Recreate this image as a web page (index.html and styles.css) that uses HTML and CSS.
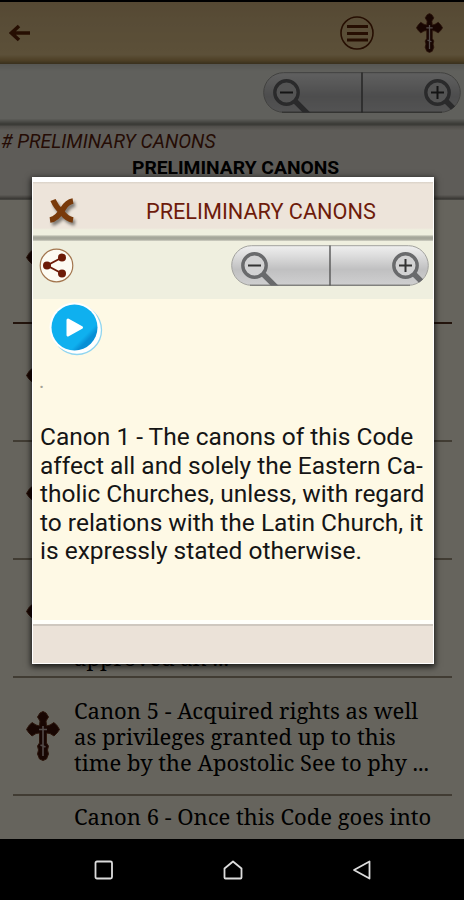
FILE: index.html
```html
<!DOCTYPE html>
<html lang="en">
<head>
  <meta charset="UTF-8" />
  <meta name="viewport" content="width=device-width, initial-scale=1.0"/>
  <title>Preliminary Canons</title>
  <link rel="stylesheet" href="styles.css">
</head>
<body>

<!-- shared icons -->
<svg class="defs" width="0" height="0">
  <defs>
    <linearGradient id="pill" x1="0" y1="0" x2="0" y2="1">
      <stop offset="0" stop-color="#efefef"/>
      <stop offset="0.25" stop-color="#dddddd"/>
      <stop offset="0.6" stop-color="#c0c0c1"/>
      <stop offset="1" stop-color="#cfcfd0"/>
    </linearGradient>
    <clipPath id="pillClip"><rect x="0.5" y="0.5" width="197" height="40" rx="20"/></clipPath>
    <linearGradient id="blue" x1="0" y1="0" x2="1" y2="1">
      <stop offset="0.7" stop-color="#0fb0ef"/>
      <stop offset="0.78" stop-color="#078fd6"/>
    </linearGradient>
    <symbol id="zoom" viewBox="0 0 198 41">
      <rect x="0.7" y="0.7" width="196.6" height="39.6" rx="19.8" fill="url(#pill)" stroke="#a2a29e" stroke-width="1"/>
      <path d="M19 40.2H179" stroke="#6d6d6b" stroke-width="1"/>
      <path d="M99 0.5V40.5" stroke="#555" stroke-width="1.4"/>
      <g fill="none" stroke="#696a6c" clip-path="url(#pillClip)">
        <path d="M32 29L46 43M183 29L197 43" stroke-width="5.4"/>
        <circle cx="23.5" cy="20.5" r="11.7" fill="#d2d2d3" stroke-width="3.4"/>
        <circle cx="174.5" cy="20.5" r="11.7" fill="#d2d2d3" stroke-width="3.4"/>
        <path d="M17 20.5H30M168 20.5H181M174.5 14V27" stroke="#333" stroke-width="2"/>
      </g>
    </symbol>
    <symbol id="cross" viewBox="0 0 34 50">
      <path d="M17 0.5L20 2L22.5 6L20 10L20.5 15L24 14L28 11.5L31 14.5L33.5 18.5L31 22L28 25L24 22.5L20.5 22L20.5 32L22.5 35L21.5 39L22.5 43L20.5 48L17 49.5L13.5 48L11.5 43L12.5 39L11.5 35L13.5 32V22L10 22.5L6 25L3 22L0.5 18.5L3 14.5L6 11.5L10 14L13.5 15L14 10L11.5 6L14 2Z" fill="#3d0f06" stroke="#6b351c" stroke-width="1"/>
      <path d="M17 15V45M13 18.5H21M14.5 34L19.5 36" stroke="#cbb8b4" stroke-width="1.6" fill="none"/>
    </symbol>
  </defs>
</svg>

<div class="phone">
  <div class="app">
    <header class="topbar">
      <svg class="back" width="22" height="18" viewBox="0 0 22 18"><path d="M21 9H3M10 2L2.5 9L10 16" fill="none" stroke="#5f2505" stroke-width="3.6"/></svg>
      <svg class="menu" width="34" height="34" viewBox="0 0 34 34">
        <circle cx="17" cy="17" r="16" fill="none" stroke="#5f2505" stroke-width="1.6"/>
        <path d="M7 10.5H28M7 17.5H28M7 24H28" stroke="#5f2505" stroke-width="2.8"/>
      </svg>
      <svg class="top-cross" width="27" height="40"><use href="#cross"/></svg>
    </header>

    <div class="tools">
      <svg width="198" height="41"><use href="#zoom"/></svg>
    </div>

    <div class="section">
      <div class="crumb"># PRELIMINARY CANONS</div>
      <div class="section-title">PRELIMINARY CANONS</div>
    </div>

    <div class="list">
      <div class="row"><svg class="bullet" width="34" height="50"><use href="#cross"/></svg></div>
      <div class="row"><svg class="bullet" width="34" height="50"><use href="#cross"/></svg></div>
      <div class="row"><svg class="bullet" width="34" height="50"><use href="#cross"/></svg></div>
      <div class="row">
        <svg class="bullet" width="34" height="50"><use href="#cross"/></svg>
        <p class="last-line">approved an ...</p>
      </div>
      <div class="row">
        <svg class="bullet" width="34" height="50"><use href="#cross"/></svg>
        <p>Canon 5 - Acquired rights as well<br>as privileges granted up to this<br>time by the Apostolic See to phy ...</p>
      </div>
      <div class="row cut">
        <p>Canon 6 - Once this Code goes into</p>
      </div>
    </div>
    <div class="shade"></div>
  </div>

  <nav class="navbar">
    <svg width="20" height="20" viewBox="0 0 20 20"><rect x="1.5" y="1.5" width="16.5" height="17" rx="1.5"/></svg>
    <svg width="20" height="20" viewBox="0 0 20 20"><path d="M1.5 8.5L10 1.5L18.5 8.5V17.5Q18.5 18.5 17.5 18.5H2.5Q1.5 18.5 1.5 17.5Z"/></svg>
    <svg width="20" height="20" viewBox="0 0 20 20"><path d="M17.5 1.5V18.5L2 10Z"/></svg>
  </nav>

  <div class="dialog">
    <div class="dialog-head">
      <svg class="close" width="34" height="34" viewBox="0 0 34 34">
        <path d="M7 5Q10 12 16 17.5Q21 24 27 25" stroke-width="5.6"/>
        <path d="M27 6Q21 7 17 14Q11 24 4 25" stroke-width="5.6"/>
      </svg>
      <h1>PRELIMINARY CANONS</h1>
    </div>
    <div class="dialog-tools">
      <svg class="share" width="35" height="35" viewBox="0 0 35 35">
        <circle cx="17.5" cy="17.5" r="16.3" fill="#fdfbf2" stroke="#a3764f" stroke-width="1.2"/>
        <path d="M23 9.5L8 17.5L23 25.5" fill="none" stroke="#6d1b07" stroke-width="1.9"/>
        <g fill="#6d1b07"><circle cx="23" cy="9.5" r="4"/><circle cx="8" cy="17.5" r="4"/><circle cx="23" cy="25.5" r="4"/></g>
      </svg>
      <svg width="198" height="41"><use href="#zoom"/></svg>
    </div>
    <div class="dialog-body">
      <svg class="play" width="54" height="54" viewBox="0 0 54 54">
        <circle cx="28" cy="28" r="24.5" fill="#fff" stroke="#8fd5f0" stroke-width="1.3"/>
        <circle cx="25.5" cy="25.5" r="25" fill="#fff"/>
        <circle cx="25.5" cy="25.5" r="23" fill="url(#blue)"/>
        <path d="M19 18L32.5 25.5L19 33Z" fill="#fff" stroke="#fff" stroke-width="3" stroke-linejoin="round"/>
      </svg>
      <span class="dot">.</span>
      <p>Canon 1 - The canons of this Code<br>affect all and solely the Eastern Ca-<br>tholic Churches, unless, with regard<br>to relations with the Latin Church, it<br>is expressly stated otherwise.</p>
    </div>
    <div class="dialog-foot"></div>
  </div>
</div>

</body>
</html>
```
FILE: styles.css
```css
* { box-sizing: border-box; }

body {
  margin: 0;
  background: #000;
  font-family: Roboto, sans-serif;
}

svg { display: block; flex: none; }

.defs { position: absolute; }

.phone {
  position: relative;
  width: 464px;
  height: 900px;
  overflow: hidden;
  display: flex;
  flex-direction: column;
}

.app {
  position: relative;
  height: 839px;
  padding-top: 2px;
  background: #000;
  overflow: hidden;
}

/* everything behind the dialog is dimmed */
.shade {
  position: absolute;
  inset: 0;
  background: rgba(0, 0, 0, 0.6);
}

.topbar {
  height: 62px;
  display: flex;
  align-items: center;
  padding: 0 21px 0 9px;
  background: linear-gradient(#d6b680, #dcbe88 30%, #e6c88e 85%, #c3a060 94%, #8f7848);
}

.menu { margin-left: auto; margin-right: 42px; }

.tools {
  height: 62px;
  display: flex;
  justify-content: flex-end;
  padding: 8px 3px 0 0;
  background: linear-gradient(#d8d8ce, #f0f0e6 12%, #f0f0e6 88%, #8d8d83 97%, #b5b1a8);
}

.section {
  height: 74px;
  padding-top: 3px;
  color: #000;
  background: linear-gradient(#c5c0b8, #ece6db 6%, #ece6db 93%, #97938b 98%, #b5b1a8);
}

.crumb {
  padding-left: 1px;
  font-size: 19.3px;
  line-height: 25px;
  font-style: italic;
  color: #5c1f0d;
}

.section-title {
  padding-left: 132px;
  font-size: 19.25px;
  line-height: 27px;
  font-weight: 700;
}

.list {
  height: 640px;
  padding: 6px 12px 0 13px;
  background: #fffae8;
}

.row {
  height: 118px;
  display: flex;
  align-items: center;
  padding-left: 13px;
  border-bottom: 2px solid #a3977f;
}

.row:first-child { border-color: #58321f; }

.row p {
  margin: 0 0 0 14px;
  font: 22px/26px "Noto Serif", "DejaVu Serif Condensed", serif;
  white-space: nowrap;
}

.row .last-line { padding-top: 77px; }

.row.cut {
  align-items: flex-start;
  padding: 7px 0 0 47px;
  border: 0;
}

.navbar {
  height: 61px;
  display: flex;
  align-items: center;
  justify-content: space-between;
  padding: 0 92px 0 94px;
  background: #000;
}

.navbar svg {
  fill: none;
  stroke: #ddd;
  stroke-width: 1.8;
  stroke-linejoin: round;
}

.dialog {
  position: absolute;
  left: 32px;
  top: 177px;
  width: 402px;
  height: 487px;
  display: flex;
  flex-direction: column;
  background: #fff;
  border: 1px solid #fff;
  border-top-width: 5px;
  box-shadow: 0 2px 6px 1px rgba(0, 0, 0, 0.75);
}

.dialog-head {
  height: 59px;
  display: flex;
  align-items: center;
  padding: 0 0 0 13px;
  background: linear-gradient(#d9d2c8, #ede4da 4%, #ede4da 78%, #efefdf 81%, #efefdf 89%, #a6a79b 93%, #a6a79b 97%, #d2d2c5);
}

.close {
  fill: none;
  stroke: #793a0b;
  filter: drop-shadow(2px 3px 1.5px rgba(0, 0, 0, 0.45));
}

.dialog-head h1 {
  margin: 0 0 0 66px;
  font-size: 21.7px;
  font-weight: 400;
  color: #6d1b0b;
  white-space: nowrap;
}

.dialog-tools {
  height: 58px;
  display: flex;
  justify-content: space-between;
  padding: 4px 4px 0 6px;
  background: #efefdf;
}

.share { margin-top: 3px; }

.dialog-body {
  flex: 1;
  padding: 3px 6px 0 6px;
  background: #fef9e5;
  border-bottom: 4px solid #fffffa;
}

.play { margin-left: 10px; }

.dot {
  display: block;
  height: 67px;
  padding-top: 13px;
  font-size: 20px;
  line-height: 24px;
  color: #a5a296;
}

.dialog-body p {
  margin: 0 0 0 1px;
  font-size: 24.5px;
  line-height: 28.5px;
  color: #151515;
  white-space: nowrap;
}

.dialog-foot {
  height: 39px;
  background: #ebe2d8;
  border-top: 2px solid #cfc8bf;
}
```
